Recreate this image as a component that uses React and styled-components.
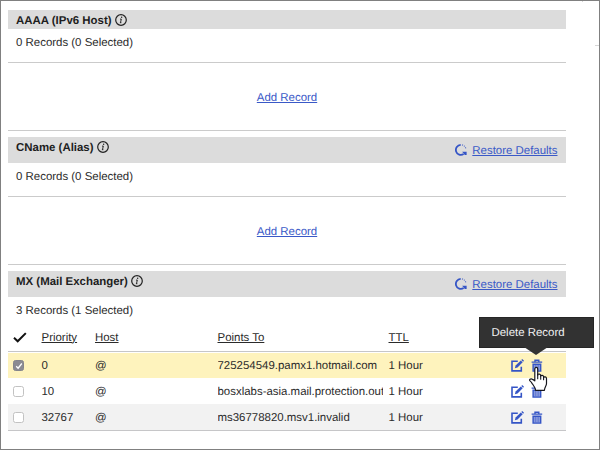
import React from "react";
import styled, { createGlobalStyle, css } from "styled-components";

const GlobalStyle = createGlobalStyle`
  * { box-sizing: border-box; }
  body {
    margin: 0;
    background: #fff;
    color: #2b2b2b;
    font: 11.45px/14px "Liberation Sans", Arial, sans-serif;
    text-rendering: geometricPrecision;
  }
`;

const Frame = styled.main`
  position: relative;
  width: 600px;
  height: 450px;
  padding: 9px 33px 0 7px;
  border: 1px solid #808080;
  overflow: hidden;
`;

const Section = styled.section`
  display: flex;
  flex-direction: column;
  margin-bottom: 6px;
`;

const SectionHeader = styled.header`
  display: flex;
  align-items: flex-start;
  justify-content: space-between;
  height: ${(p) => (p.$short ? 19 : 26)}px;
  padding: 4px 8.5px 0 8px;
  background: #dcdcdc;
`;

const Title = styled.h2`
  display: flex;
  gap: 3px;
  margin: 0;
  color: #1e1e1e;
  font-size: inherit;
  font-weight: bold;
`;

const InfoSvg = styled.svg`
  width: 12px;
  height: 12px;
`;

const Restore = styled.div`
  display: flex;
  align-items: center;
  gap: 5px;
  margin-top: 3px;

  svg {
    margin-bottom: 2px;
  }
`;

const Link = styled.a`
  color: #3a59c7;
  text-decoration: underline;
  text-decoration-thickness: 1px;
  text-underline-offset: 1px;
`;

const Count = styled.div`
  height: 33px;
  padding: 7px 8px 0;
`;

const EmptyArea = styled.div`
  display: flex;
  justify-content: center;
  height: 69px;
  padding-top: 28px;
  border-top: 1px solid #cbcbcb;
  border-bottom: 1px solid #cbcbcb;
`;

const Table = styled.div`
  display: flex;
  flex-direction: column;
  border-bottom: 1px solid #c6c6c8;
`;

const rowGrid = css`
  display: grid;
  grid-template-columns: 33.5px 53.5px 122.5px 171px 1fr 55px;
  align-items: center;
`;

const HeadRow = styled.div`
  ${rowGrid}
  height: 22px;
  padding-bottom: 5px;
  border-bottom: 1px solid #c6c6c8;
  margin-bottom: 1px;
`;

const Row = styled.div`
  ${rowGrid}
  height: ${(p) => (p.$tone === "selected" ? 25 : 26)}px;
  padding-top: ${(p) => (p.$tone === "selected" ? 0 : 1)}px;
  background: ${(p) =>
    p.$tone === "selected" ? "#fef3bd" : p.$tone === "alt" ? "#f2f2f2" : "#fff"};
`;

const ColumnLabel = styled.span`
  text-decoration: underline;
  text-underline-offset: 1px;
  text-decoration-thickness: 1px;
`;

const TickCell = styled.span`
  display: flex;
  padding: 0 0 1px 5px;
`;

const Cell = styled.span`
  white-space: nowrap;
`;

const HostName = styled(Cell)`
  width: 165px;
  overflow: hidden;
`;

const CheckBox = styled.span`
  display: flex;
  align-items: center;
  justify-content: center;
  width: 11px;
  height: 11px;
  margin: 0 0 0 5px;
  border: 1px solid ${(p) => (p.$on ? "#85858c" : "#c2c2c2")};
  border-radius: 2.5px;
  background: ${(p) => (p.$on ? "#8b8b92" : "#fff")};
`;

const Actions = styled.span`
  display: flex;
  align-items: center;
  gap: 7px;
`;

const Tooltip = styled.div`
  position: absolute;
  left: 478px;
  top: 316px;
  width: 115px;
  height: 31px;
  padding: 8px 11.5px;
  background: #323232;
  border: 1px solid #262626;
  color: #f1f1f1;
  white-space: nowrap;

  &::after {
    content: "";
    position: absolute;
    left: 44px;
    top: 29px;
    width: 24px;
    height: 8px;
    background: #323232;
    clip-path: polygon(0 0, 100% 0, 50% 100%);
  }
`;

const PointerSvg = styled.svg`
  position: absolute;
  left: 527px;
  top: 365px;
  width: 20px;
  height: 26px;
`;

const Speck = styled.span`
  position: absolute;
  left: ${(p) => p.$x}px;
  top: ${(p) => p.$y}px;
  width: ${(p) => p.$w}px;
  height: 1px;
  background: #d6d6d6;
`;

const InfoIcon = () => (
  <InfoSvg viewBox="0 0 12 12">
    <circle cx="6" cy="6" r="5.3" fill="none" stroke="#222" strokeWidth="1.2" />
    <path d="M6.3 5 5.5 8.7M5 5.1h1.3M4.9 8.7h1.5" fill="none" stroke="#222" strokeWidth=".95" />
    <circle cx="6.65" cy="3.3" r=".72" fill="#222" />
  </InfoSvg>
);

const RestoreIcon = () => (
  <svg width="12" height="12" viewBox="0 0 12 12">
    <path d="M5.7.9A5 5 0 1 0 8.6 10.1" fill="none" stroke="#3555c6" strokeWidth="1.8" />
    <path d="M7 .9A5 5 0 0 1 10.9 4.8" fill="none" stroke="#5871c9" strokeWidth="1.1" strokeDasharray="1.1 1" />
    <path d="M7.2 7.8h4.4v3.3H9.8z" fill="#3555c6" />
  </svg>
);

const TickIcon = () => (
  <svg width="14" height="11" viewBox="0 0 14 11">
    <path d="M1 5.8 4.7 9.3 12.8 1.1" fill="none" stroke="#111" strokeWidth="2" />
  </svg>
);

const EditIcon = () => (
  <svg width="13" height="13" viewBox="0 0 13 13">
    <path d="M6.8 2.2H1v9.7h9.3V7.7" fill="none" stroke="#3555c6" strokeWidth="1.6" />
    <path d="m3.9 9.3.7-2.7 5.2-5.2 1.9 1.8-5.2 5.3z" fill="#3555c6" />
    <path d="m10.3.9.9-.9L13 1.8l-.9.9z" fill="#3555c6" />
  </svg>
);

const TrashIcon = () => (
  <svg width="12" height="13" viewBox="0 0 12 13">
    <path d="M.6 3.1h10.6M4 2.8V1.2h3.8v1.6" fill="none" stroke="#3555c6" strokeWidth="1.4" />
    <path d="M2.1 5.2h7.6v6.9H2.1z" fill="#8699dc" stroke="#3555c6" strokeWidth="1.4" />
    <path d="M4.6 6v5.3M7.2 6v5.3" stroke="#5a72d0" strokeWidth=".8" />
  </svg>
);

const Pointer = () => (
  <PointerSvg viewBox="0 0 20 26">
    <path
      d="M6.8 14.8V3.1C6.8.9 9.7.9 9.7 3.1v6c.2-1.6 3-1.4 3 .5v.6c.4-1.4 2.9-1.2 2.9.6v.8c.5-1.2 2.9-.9 2.9 1v4.8c0 2.6-2 3.6-2.1 6.9H7.6c-.1-2.8-2.1-4.7-3.4-6.7-.8-1.3-1.4-2-2.2-2.7-1.1-1.1.4-2.6 2.1-1.8 1 .4 1.8.9 2.7 1.7z"
      fill="#fff" stroke="#16161c" strokeWidth="1.2" strokeLinejoin="round"
    />
    <path d="M9.7 8.2v4.6M12.7 9.7v3.5M15.6 10.9v2.8" fill="none" stroke="#16161c" strokeWidth="1.1" strokeLinecap="round" />
  </PointerSvg>
);

const RecordSection = ({ title, count, short, restore, children }) => (
  <Section>
    <SectionHeader $short={short}>
      <Title>{title}<InfoIcon /></Title>
      {restore && <Restore><RestoreIcon /><Link>Restore Defaults</Link></Restore>}
    </SectionHeader>
    <Count>{count}</Count>
    {children}
  </Section>
);

const records = [
  { priority: "0", target: "725254549.pamx1.hotmail.com", tone: "selected" },
  { priority: "10", target: "bosxlabs-asia.mail.protection.out", tone: "plain" },
  { priority: "32767", target: "ms36778820.msv1.invalid", tone: "alt" },
];

export default function App() {
  return (
    <Frame>
      <GlobalStyle />
      <RecordSection title="AAAA (IPv6 Host)" count="0 Records (0 Selected)" short>
        <EmptyArea><Link>Add Record</Link></EmptyArea>
      </RecordSection>
      <RecordSection title="CName (Alias)" count="0 Records (0 Selected)" restore>
        <EmptyArea><Link>Add Record</Link></EmptyArea>
      </RecordSection>
      <RecordSection title="MX (Mail Exchanger)" count="3 Records (1 Selected)" restore>
        <Table>
          <HeadRow>
            <TickCell><TickIcon /></TickCell>
            <ColumnLabel>Priority</ColumnLabel>
            <ColumnLabel>Host</ColumnLabel>
            <ColumnLabel>Points To</ColumnLabel>
            <ColumnLabel>TTL</ColumnLabel>
          </HeadRow>
          {records.map((r) => (
            <Row key={r.priority} $tone={r.tone}>
              <CheckBox $on={r.tone === "selected"}>
                {r.tone === "selected" && (
                  <svg width="8" height="8" viewBox="0 0 8 8">
                    <path d="M1.2 4.3 3.1 6.2 6.8 1.5" fill="none" stroke="#fff" strokeWidth="1.3" />
                  </svg>
                )}
              </CheckBox>
              <Cell>{r.priority}</Cell>
              <Cell>@</Cell>
              <HostName>{r.target}</HostName>
              <Cell>1 Hour</Cell>
              <Actions><EditIcon /><TrashIcon /></Actions>
            </Row>
          ))}
        </Table>
      </RecordSection>
      <Speck $x={594} $y={44} $w={4} />
      <Speck $x={581} $y={0} $w={1} />
      <Tooltip role="tooltip">Delete Record</Tooltip>
      <Pointer />
    </Frame>
  );
}
